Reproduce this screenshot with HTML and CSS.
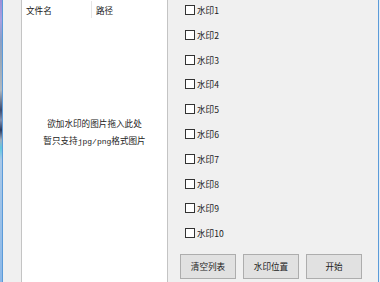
FILE: index.html
```html
<!DOCTYPE html>
<html lang="zh">
<head>
<meta charset="utf-8">
<title>水印</title>
<link rel="stylesheet" href="styles.css">
</head>
<body>
<div class="screen">
  <div class="desk"></div>
  <div class="window">
    <div class="gutter"></div>
    <div class="list">
      <div class="list-head">
        <div class="col col-name">文件名</div>
        <div class="col col-path">路径</div>
      </div>
      <div class="list-body">
        <div class="hint">欲加水印的图片拖入此处</div>
        <div class="hint">暂只支持<span class="latin">jpg/png</span>格式图片</div>
      </div>
    </div>
    <div class="side">
      <div class="checks">
        <label class="check"><span class="box"></span><span>水印1</span></label>
        <label class="check"><span class="box"></span><span>水印2</span></label>
        <label class="check"><span class="box"></span><span>水印3</span></label>
        <label class="check"><span class="box"></span><span>水印4</span></label>
        <label class="check"><span class="box"></span><span>水印5</span></label>
        <label class="check"><span class="box"></span><span>水印6</span></label>
        <label class="check"><span class="box"></span><span>水印7</span></label>
        <label class="check"><span class="box"></span><span>水印8</span></label>
        <label class="check"><span class="box"></span><span>水印9</span></label>
        <label class="check"><span class="box"></span><span>水印10</span></label>
      </div>
      <div class="buttons">
        <div class="btn">清空列表</div>
        <div class="btn">水印位置</div>
        <div class="btn">开始</div>
      </div>
    </div>
  </div>
  <div class="edge"></div>
</div>
</body>
</html>
```
FILE: styles.css
```css
html, body {
  margin: 0;
  padding: 0;
}
body {
  width: 380px;
  height: 282px;
  overflow: hidden;
  background: #f0f0f0;
  font-family: "Noto Sans CJK SC", "Liberation Sans", sans-serif;
  font-size: 8.6px;
  color: #1a1a1a;
}
.screen {
  display: flex;
  height: 282px;
}
.desk {
  width: 2px;
  background: linear-gradient(to bottom, #9c8fd8 0px, #a9a0e0 20px, #8aa0c8 40px, #9aa8b8 60px, #b0b8c0 90px, #3a4a70 110px, #8090b0 120px, #2a3a60 130px, #a0b0c0 140px, #60c8e0 148px, #a8c8e8 160px, #8cb8e8 282px);
}
.window {
  flex: 1;
  display: flex;
  background: #f0f0f0;
  border-left: 1px solid #5b9bd9;
  border-right: 1px solid #5b9bd9;
}
.edge {
  width: 1px;
  background: #e4eef8;
}
.gutter {
  width: 18px;
}
.list {
  width: 145px;
  background: #ffffff;
  border-left: 1px solid #c4c4c4;
  border-right: 1px solid #c4c4c4;
  display: flex;
  flex-direction: column;
}
.list-head {
  display: flex;
  height: 19px;
}
.col {
  display: flex;
  align-items: center;
  height: 19px;
  padding-left: 4px;
  box-sizing: border-box;
}
.col-name {
  width: 70px;
  border-right: 1px solid #e5e5e5;
  height: 17px;
  margin-top: 1px;
}
.col-path {
  flex: 1;
}
.list-body {
  display: flex;
  flex-direction: column;
  align-items: center;
  padding-top: 98px;
  gap: 4px;
}
.hint {
  line-height: 13px;
  color: #222;
}
.latin {
  font-family: "Liberation Mono", monospace;
  font-size: 8px;
}
.side {
  flex: 1;
  display: flex;
  flex-direction: column;
}
.checks {
  display: flex;
  flex-direction: column;
  margin-top: -2.4px;
  padding-left: 17px;
}
.check {
  display: flex;
  align-items: center;
  height: 24.8px;
  gap: 2px;
}
.box {
  width: 8px;
  height: 8px;
  border: 1px solid #333333;
  background: #ffffff;
}
.buttons {
  display: flex;
  gap: 7px;
  margin-top: 8.4px;
  padding-left: 12px;
}
.btn {
  width: 56px;
  height: 25px;
  box-sizing: border-box;
  background: #e1e1e1;
  border: 1px solid #adadad;
  display: flex;
  align-items: center;
  justify-content: center;
}
```
